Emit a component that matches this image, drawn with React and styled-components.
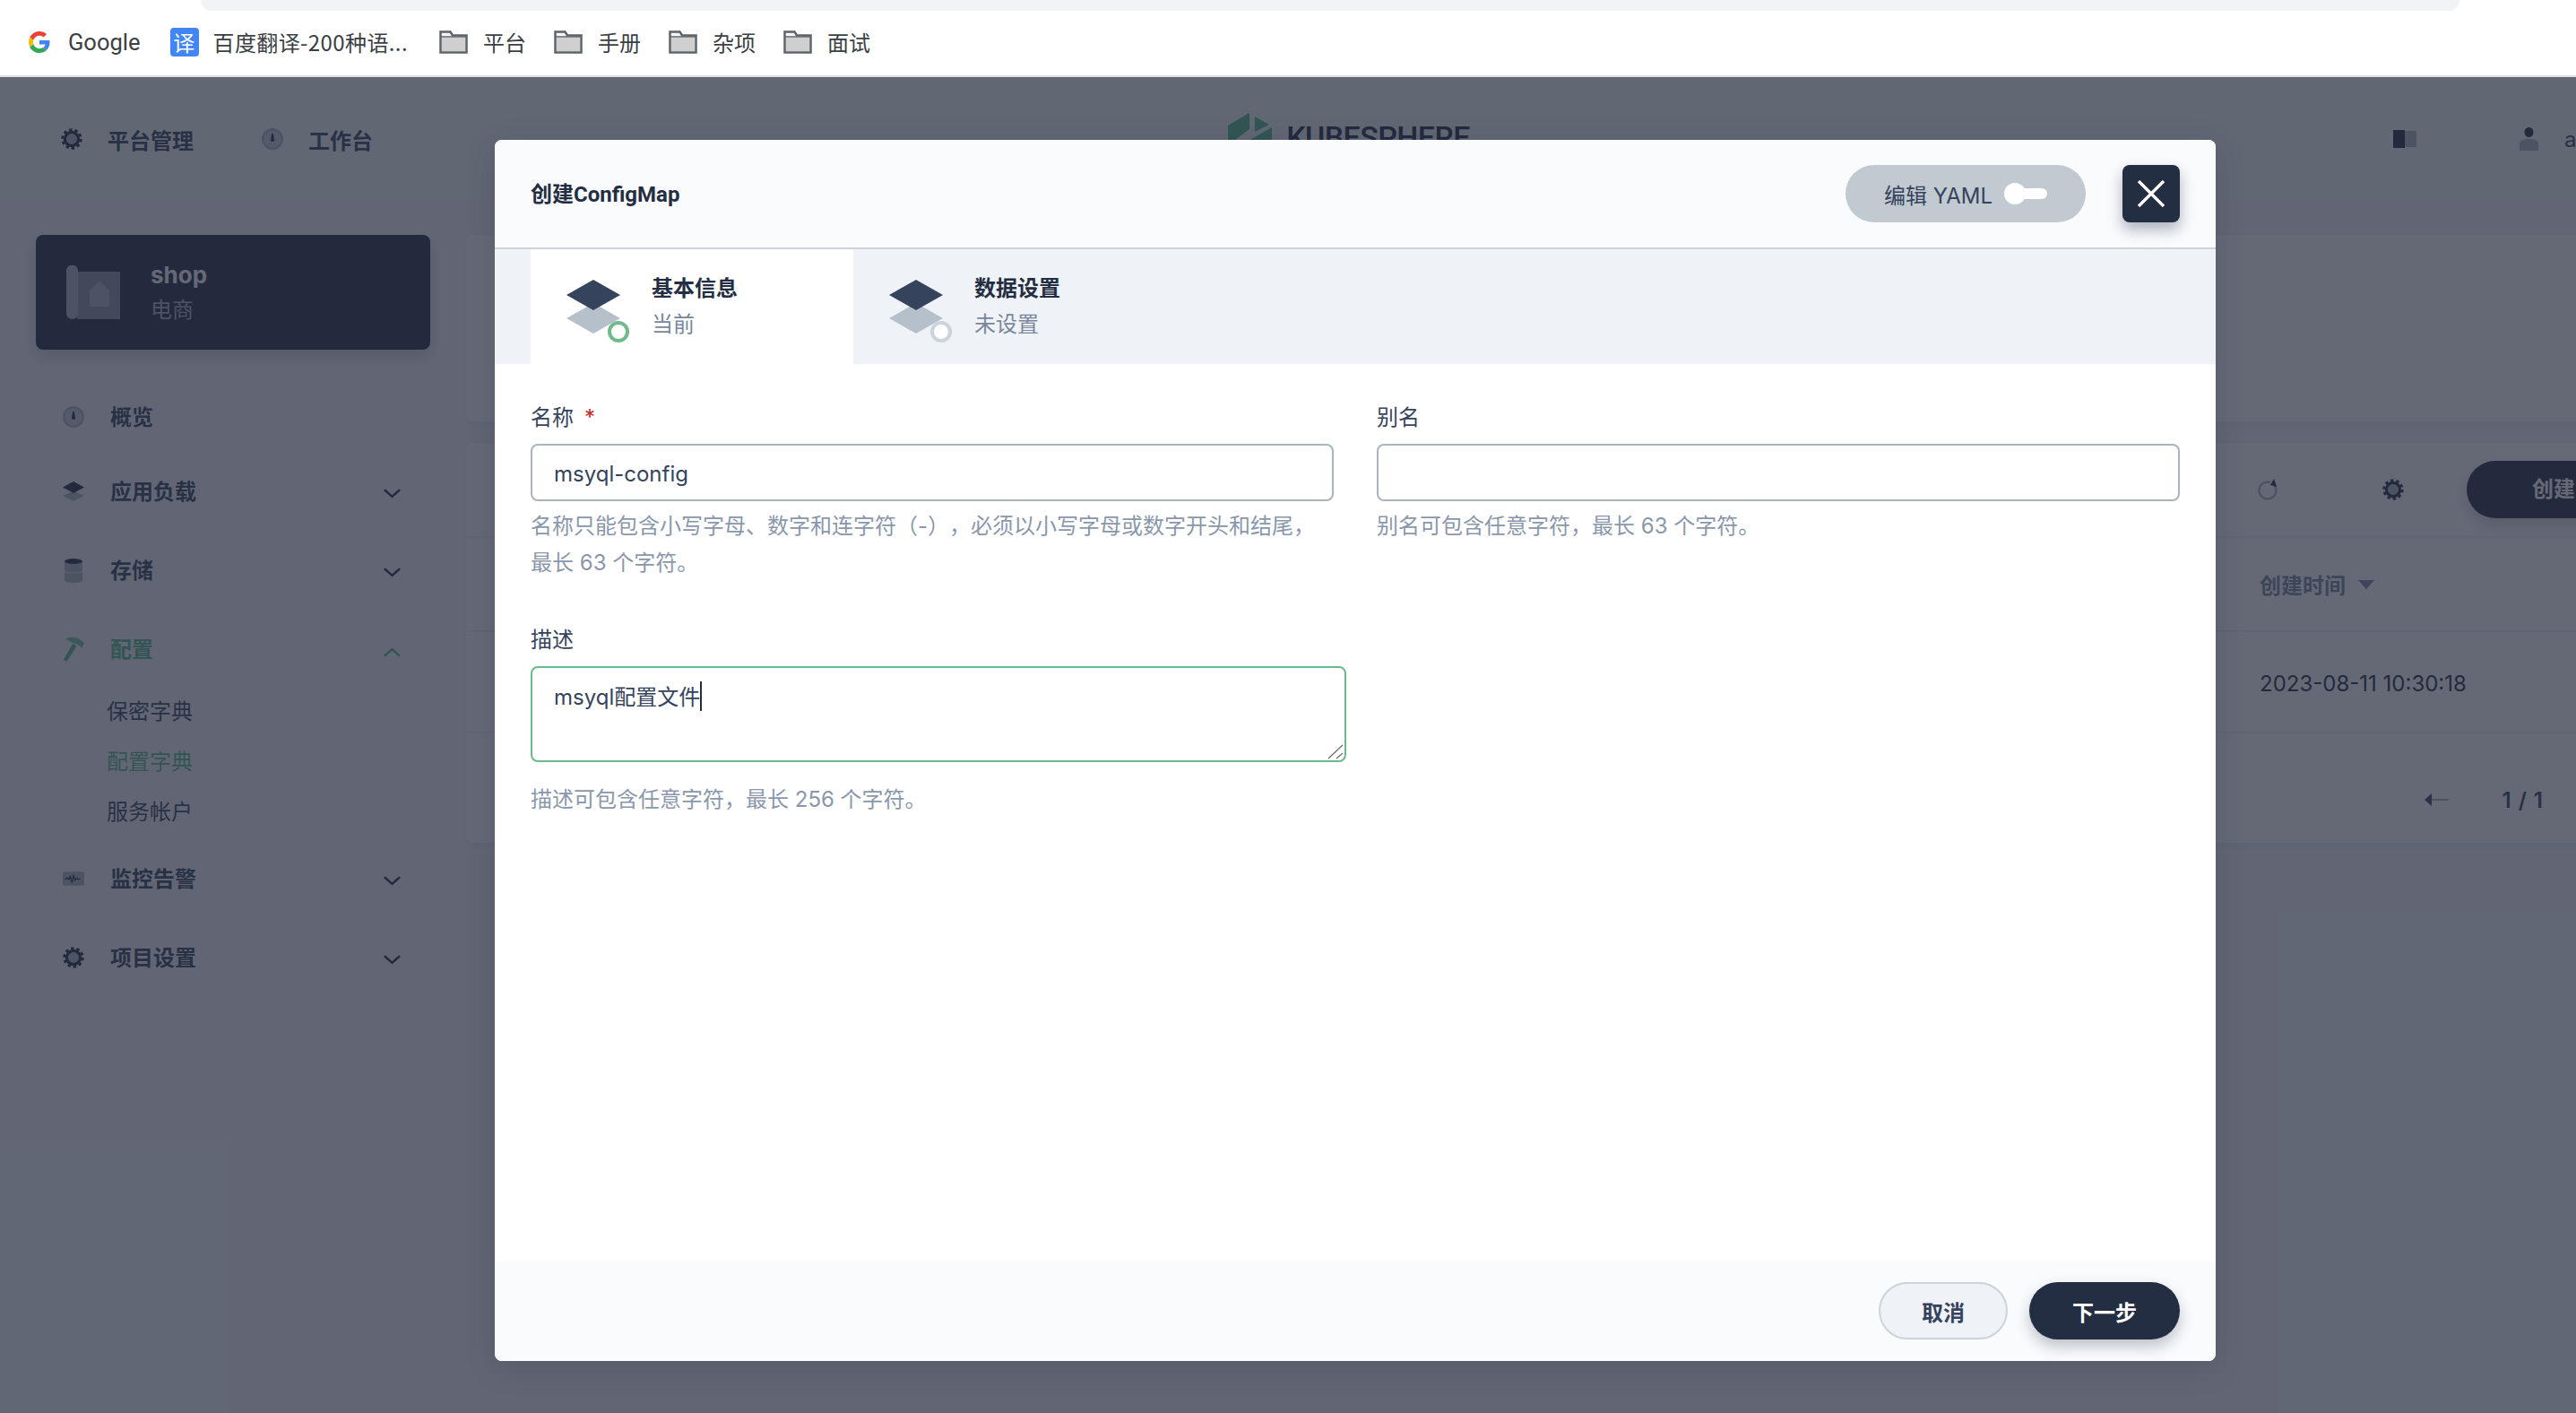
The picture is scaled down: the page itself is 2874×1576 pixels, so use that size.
import styled, { createGlobalStyle } from "styled-components";

const GlobalStyle = createGlobalStyle`
  html, body {
    margin: 0;
    padding: 0;
    overflow: hidden;
    background: #fff;
  }
  * {
    box-sizing: border-box;
  }
  body {
    font-family: Inter, "Noto Sans CJK SC", sans-serif;
    font-size: 24px;
    color: #242e42;
    text-spacing-trim: space-all;
  }
`;

const Screen = styled.div`
  width: 2874px;
  height: 1576px;
  overflow: hidden;
  display: flex;
  flex-direction: column;
`;

/* browser chrome */
const BookmarkBar = styled.div`
  position: relative;
  flex: none;
  height: 86px;
  padding: 10px 0 0 32px;
  display: flex;
  align-items: center;
  gap: 31px;
  background: #fff;
  border-bottom: 2px solid #dfe1e5;
`;

const AddressEdge = styled.div`
  position: absolute;
  top: 0;
  left: 224px;
  width: 2520px;
  height: 12px;
  background: #f1f3f4;
  border-radius: 0 0 24px 24px;
`;

const Bookmark = styled.div`
  display: flex;
  align-items: center;
  gap: ${({ $gap }) => $gap || 17}px;
  margin-right: ${({ $after }) => $after || 0}px;
  font-family: "Noto Sans CJK SC", sans-serif;
  font-size: 24px;
  line-height: 32px;
  letter-spacing: ${({ $tracking }) => $tracking || 0}px;
  color: #3c4043;
`;

const GoogleName = styled.span`
  font-family: Roboto, sans-serif;
  font-size: 25.5px;
`;

const TranslateBadge = styled.span`
  width: 32px;
  height: 32px;
  border-radius: 4px;
  background: #4285f4;
  color: #fff;
  font-size: 24px;
  line-height: 32px;
  text-align: center;
`;

/* page under the dialog */
const Page = styled.div`
  position: relative;
  flex: 1;
  width: 3024px;
  background: #f4f6f8;
`;

const TopNav = styled.header`
  height: 138px;
  padding: 0 68px;
  display: grid;
  grid-template-columns: 1fr auto 1fr;
  align-items: center;
  background: #f5f7f9;
`;

const NavLeft = styled.div`
  display: flex;
  align-items: center;
`;

const NavLink = styled.div`
  display: flex;
  align-items: center;
  gap: 28px;
  margin-right: 76px;
  font-weight: 600;
  color: #36435c;
`;

const Logo = styled.div`
  display: flex;
  align-items: flex-start;
  gap: 16px;
  align-self: start;
  margin: 40px 0 0 -14px;
`;

const LogoText = styled.span`
  font-family: Roboto, sans-serif;
  font-size: 34px;
  font-weight: 500;
  line-height: 34px;
  margin-top: 10px;
  letter-spacing: -0.6px;
  color: #242e42;
`;

const NavRight = styled.div`
  display: flex;
  justify-content: flex-end;
  align-items: center;
  gap: 115px;
`;

const UserBox = styled.div`
  display: flex;
  align-items: center;
  gap: 29px;
  width: 145px;
  color: #36435c;
`;

const Main = styled.div`
  margin-top: 38px;
  padding: 0 40px;
  display: flex;
  gap: 40px;
`;

const Sidebar = styled.aside`
  flex: none;
  width: 440px;
`;

const ProjectCard = styled.div`
  height: 128px;
  margin-bottom: 36px;
  padding: 34px;
  display: flex;
  gap: 34px;
  border-radius: 8px;
  background: #242e42;
  box-shadow: 0 8px 16px rgba(36, 46, 66, 0.2);
`;

const ProjectText = styled.div`
  margin-top: -9px;
  font-size: 24px;
  line-height: 38px;
  color: #abb4be;

  strong {
    display: block;
    font-size: 26px;
    font-weight: 700;
    line-height: 40px;
    color: #fff;
  }
`;

const SideRow = styled.div`
  height: ${({ $height }) => $height || 88}px;
  padding: 0 33px 0 30px;
  display: flex;
  align-items: center;
  font-weight: 600;
  color: ${({ $active }) => ($active ? "#55bc8a" : "#36435c")};
`;

const SideIcon = styled.span`
  flex: none;
  width: 24px;
  margin-right: 29px;
  display: flex;
  justify-content: center;
`;

const SideLabel = styled.span`
  flex: 1;
  margin-top: -3px;
`;

const Chevron = styled.svg`
  flex: none;
  width: 19px;
  height: 12px;
  margin-top: 6px;
`;

const SubList = styled.div`
  margin: -2px 0 2px;
`;

const SubItem = styled.div`
  height: 56px;
  padding-left: 79px;
  line-height: 56px;
  color: ${({ $active }) => ($active ? "#55bc8a" : "#36435c")};
`;

const Content = styled.main`
  flex: 1;
  display: flex;
  flex-direction: column;
  gap: 24px;
`;

const Card = styled.section`
  height: ${({ $height }) => $height}px;
  background: #fff;
  border-radius: 8px;
  box-shadow: 0 4px 8px rgba(36, 46, 66, 0.06);
`;

const Toolbar = styled.div`
  height: 106px;
  padding-right: 38px;
  display: flex;
  justify-content: flex-end;
  align-items: center;
  border-bottom: 2px solid #eff2f7;
`;

const ToolIcon = styled.span`
  display: flex;
  margin-right: ${({ $space }) => $space}px;
`;

const CreateButton = styled.div`
  width: 194px;
  height: 64px;
  border-radius: 32px;
  background: #242e42;
  color: #fff;
  font-weight: 600;
  line-height: 64px;
  text-align: center;
  box-shadow: 0 8px 16px rgba(36, 46, 66, 0.2);
`;

const TableRow = styled.div`
  height: ${({ $height }) => $height}px;
  padding: ${({ $head }) => ($head ? 0 : 3)}px 0 0 2001px;
  display: flex;
  align-items: center;
  gap: 14px;
  border-bottom: 2px solid #eff2f7;
  font-weight: ${({ $head }) => ($head ? 600 : 400)};
  color: ${({ $head }) => ($head ? "#79879c" : "#242e42")};
`;

const SortArrow = styled.span`
  width: 0;
  height: 0;
  border-left: 9px solid transparent;
  border-right: 9px solid transparent;
  border-top: 10px solid #79879c;
`;

const Pager = styled.div`
  height: 120px;
  padding: 28px 146px 0 0;
  display: flex;
  justify-content: flex-end;
  align-items: center;
  gap: 60px;
  font-weight: 600;
  letter-spacing: 1px;
  color: #36435c;
`;

/* dialog */
const Overlay = styled.div`
  position: absolute;
  inset: 0;
  padding-top: 70px;
  display: flex;
  justify-content: center;
  align-items: flex-start;
  background: rgba(35, 42, 60, 0.7);
`;

const Modal = styled.div`
  width: 1920px;
  height: 1362px;
  display: flex;
  flex-direction: column;
  overflow: hidden;
  background: #fff;
  border-radius: 8px;
  box-shadow: 0 8px 32px rgba(36, 46, 66, 0.2);
`;

const ModalHeader = styled.div`
  flex: none;
  height: 122px;
  padding: 0 40px;
  display: flex;
  align-items: center;
  background: #f9fbfd;
  border-bottom: 2px solid #ccd3db;
`;

const ModalTitle = styled.h1`
  flex: 1;
  margin: -3px 0 0;
  font-family: Roboto, "Noto Sans CJK SC", sans-serif;
  font-size: 24px;
  font-weight: 700;
  color: #242e42;
`;

const YamlSwitch = styled.div`
  width: 268px;
  height: 64px;
  margin-right: 41px;
  padding-left: 43px;
  display: flex;
  align-items: center;
  gap: 13px;
  border-radius: 32px;
  background: #c1c9d1;
  color: #36435c;
  font-size: 24px;
  white-space: nowrap;
`;

const SwitchTrack = styled.span`
  position: relative;
  width: 48px;
  height: 12px;
  border-radius: 6px;
  background: #fff;

  &::before {
    content: "";
    position: absolute;
    left: 0;
    top: -6px;
    width: 24px;
    height: 24px;
    border-radius: 50%;
    background: #fff;
  }
`;

const CloseButton = styled.div`
  width: 64px;
  height: 64px;
  display: flex;
  justify-content: center;
  align-items: center;
  border-radius: 8px;
  background: #242e42;
  box-shadow: 0 8px 16px rgba(36, 46, 66, 0.36);
`;

const Tabs = styled.div`
  flex: none;
  height: 128px;
  padding-left: 40px;
  display: flex;
  background: #eff2f7;
`;

const Tab = styled.div`
  width: 360px;
  padding-left: 40px;
  display: flex;
  align-items: center;
  gap: 25px;
  background: ${({ $active }) => ($active ? "#fff" : "transparent")};
`;

const StepSvg = styled.svg`
  flex: none;
  width: 70px;
  height: 70px;
  margin-top: 10px;
`;

const TabText = styled.div`
  line-height: 40px;
  color: #79879c;

  strong {
    display: block;
    font-weight: 700;
    color: #242e42;
  }
`;

const Form = styled.div`
  flex: 1;
  padding: 40px 40px 0;
`;

const FieldGrid = styled.div`
  display: grid;
  grid-template-columns: 896px 896px;
  gap: 48px;
  margin-bottom: 46px;
`;

const Label = styled.div`
  height: 40px;
  margin-bottom: 9px;
  line-height: 40px;
  color: #36435c;

  em {
    margin-left: 12px;
    font-style: normal;
    color: #ca2621;
  }
`;

const TextBox = styled.div`
  height: 64px;
  padding: 2px 24px 0;
  display: flex;
  align-items: center;
  border: 2px solid #abb4be;
  border-radius: 8px;
  color: #36435c;
`;

const AreaBox = styled.div`
  position: relative;
  width: 910px;
  height: 107px;
  padding: 13px 24px;
  line-height: 40px;
  border: 2px solid #6bb98d;
  border-radius: 8px;
  color: #36435c;
`;

const Caret = styled.span`
  display: inline-block;
  width: 2px;
  height: 33px;
  vertical-align: -7px;
  background: #242e42;
`;

const ResizeGrip = styled.svg`
  position: absolute;
  right: 1px;
  bottom: 1px;
  width: 18px;
  height: 17px;
`;

const Hint = styled.div`
  margin-top: ${({ $top }) => $top || 8}px;
  line-height: 40.5px;
  color: #8a97ab;
`;

const ModalFooter = styled.div`
  flex: none;
  height: 112px;
  padding: 0 40px;
  display: flex;
  justify-content: flex-end;
  align-items: center;
  gap: 24px;
  background: #f9fbfd;
`;

const Button = styled.div`
  width: ${({ $primary }) => ($primary ? 168 : 144)}px;
  height: 64px;
  border-radius: 32px;
  border: ${({ $primary }) => ($primary ? "none" : "2px solid #ccd3db")};
  background: ${({ $primary }) => ($primary ? "#242e42" : "#eff2f7")};
  color: ${({ $primary }) => ($primary ? "#fff" : "#36435c")};
  box-shadow: ${({ $primary }) => ($primary ? "0 8px 16px rgba(36, 46, 66, 0.28)" : "none")};
  font-weight: 600;
  display: flex;
  justify-content: center;
  align-items: center;
`;

const GoogleIcon = () => (
  <svg width="24" height="24" viewBox="0 0 48 48">
    <path fill="#EA4335" d="M24 9.5c3.54 0 6.71 1.22 9.21 3.6l6.85-6.85C35.9 2.38 30.47 0 24 0 14.62 0 6.51 5.38 2.56 13.22l7.98 6.19C12.43 13.72 17.74 9.5 24 9.5z" />
    <path fill="#4285F4" d="M46.98 24.55c0-1.57-.15-3.09-.38-4.55H24v9.02h12.94c-.58 2.96-2.26 5.48-4.78 7.18l7.73 6c4.51-4.18 7.09-10.36 7.09-17.65z" />
    <path fill="#FBBC05" d="M10.53 28.59c-.48-1.45-.76-2.99-.76-4.59s.27-3.14.76-4.59l-7.98-6.19C.92 16.46 0 20.12 0 24c0 3.88.92 7.54 2.56 10.78l7.97-6.19z" />
    <path fill="#34A853" d="M24 48c6.48 0 11.93-2.13 15.89-5.81l-7.73-6c-2.15 1.45-4.92 2.3-8.16 2.3-6.26 0-11.57-4.22-13.47-9.91l-7.98 6.19C6.51 42.62 14.62 48 24 48z" />
  </svg>
);

const FolderIcon = () => (
  <svg width="32" height="26" viewBox="0 0 32 26">
    <path d="M1.5 24.5V1.5h11l2.5 4h15.5v19z" fill="#f6f6f6" stroke="#5f6368" strokeWidth="2.5" />
    <rect x="3" y="8" width="26" height="15" fill="#cfcfcf" />
    <path d="M1.5 7h29" stroke="#5f6368" strokeWidth="1.5" />
  </svg>
);

const Gear = ({ size = 24 }) => (
  <svg width={size} height={size} viewBox="0 0 24 24">
    <circle cx="12" cy="12" r="10.2" fill="none" stroke="#242e42" strokeWidth="3" strokeDasharray="3.4 3" />
    <circle cx="12" cy="12" r="7.5" fill="none" stroke="#242e42" strokeWidth="3.4" />
    <circle cx="12" cy="12" r="5.8" fill="#abb4be" />
  </svg>
);

const Gauge = ({ size = 24 }) => (
  <svg width={size} height={size} viewBox="0 0 24 24">
    <circle cx="12" cy="12" r="12" fill="#abb4be" />
    <circle cx="12" cy="12" r="9.5" fill="#c7ced6" />
    <path d="M10 13l1.2-7h1.6l1.2 7a2 2 0 1 1-4 0z" fill="#242e42" />
  </svg>
);

const LayersIcon = () => (
  <svg width="24" height="24" viewBox="0 0 24 24">
    <path d="M12 11.5L24 17l-12 6-12-6z" fill="#abb4be" />
    <path d="M12 1l12 6.5L12 14 0 7.5z" fill="#242e42" />
  </svg>
);

const DatabaseIcon = () => (
  <svg width="20" height="27" viewBox="0 0 20 27">
    <path d="M0 3h20v10c0 2-4.5 2.5-10 2.5S0 15 0 13z" fill="#abb4be" />
    <path d="M0 15c3 1.6 17 1.6 20 0v9c0 2-4.5 3-10 3S0 26 0 24z" fill="#abb4be" />
    <ellipse cx="10" cy="3" rx="10" ry="3" fill="#242e42" />
  </svg>
);

const HammerIcon = () => (
  <svg width="24" height="28" viewBox="0 0 24 28">
    <path d="M1 25.5L11 8l4.5 2.5L4.5 28z" fill="#55bc8a" />
    <path d="M3 2.5C9-.5 18 0 24 7.5l-3 5.5c-2-3.5-5-5-9-5.5z" fill="#72c79f" />
  </svg>
);

const MonitorIcon = () => (
  <svg width="28" height="18" viewBox="0 0 28 18">
    <rect width="28" height="18" rx="2" fill="#abb4be" />
    <path d="M3 10l3-2 2 2 2-4 2 8 2-9 2 6 2-3 2 2 3-1" fill="none" stroke="#242e42" strokeWidth="1.5" />
  </svg>
);

const ChevronIcon = ({ up, color = "#242e42" }) => (
  <Chevron viewBox="0 0 20 12">
    <path d={up ? "M1 11l9-8 9 8" : "M1 1l9 8 9-8"} fill="none" stroke={color} strokeWidth="2.6" />
  </Chevron>
);

const StepIcon = ({ color }) => (
  <StepSvg viewBox="0 0 70 70">
    <path d="M30 26L60 43 30 60 0 43z" fill="#b6c0ca" />
    <path d="M30 0L60 17 30 34 0 17z" fill="#36435c" />
    <circle cx="58" cy="58" r="10" fill="#fff" stroke={color} strokeWidth="4" />
  </StepSvg>
);

const menu = [
  { label: "应用负载", icon: <LayersIcon /> },
  { label: "存储", icon: <DatabaseIcon /> },
];

const App = () => {
  return (
    <Screen>
      <GlobalStyle />
      <BookmarkBar>
        <AddressEdge />
        <Bookmark $gap={20} $after={2}>
          <GoogleIcon />
          <GoogleName>Google</GoogleName>
        </Bookmark>
        <Bookmark $gap={16} $after={4} $tracking={0.4}>
          <TranslateBadge>译</TranslateBadge>
          百度翻译-200种语...
        </Bookmark>
        {["平台", "手册", "杂项", "面试"].map((name) => (
          <Bookmark key={name}>
            <FolderIcon />
            {name}
          </Bookmark>
        ))}
      </BookmarkBar>

      <Page>
        <TopNav>
          <NavLeft>
            <NavLink>
              <Gear />
              平台管理
            </NavLink>
            <NavLink>
              <Gauge />
              工作台
            </NavLink>
          </NavLeft>
          <Logo>
            <svg width="49" height="58" viewBox="0 0 49 58">
              <path d="M0 14L24 0v14L0 28z M30 4l16 9-16 8z" fill="#55bc8a" />
              <path d="M0 14l24-14v18L8 30h41v-14L0 44z" fill="#55bc8a" />
            </svg>
            <LogoText>KUBESPHERE</LogoText>
          </Logo>
          <NavRight>
            <svg width="26" height="20" viewBox="0 0 26 20">
              <rect width="13" height="20" fill="#242e42" />
              <rect x="13" y="1" width="13" height="18" fill="#abb4be" />
            </svg>
            <UserBox>
              <svg width="21" height="26" viewBox="0 0 21 26">
                <ellipse cx="10.5" cy="5.5" rx="5" ry="5.5" fill="#242e42" />
                <path d="M0 26v-8c0-3 4-5 10.5-5S21 15 21 18v8z" fill="#abb4be" />
              </svg>
              admin
            </UserBox>
          </NavRight>
        </TopNav>

        <Main>
          <Sidebar>
            <ProjectCard>
              <svg width="60" height="60" viewBox="0 0 60 60">
                <rect x="12" y="7" width="48" height="53" fill="#8b95a5" />
                <path d="M0 6a6.5 6.5 0 0 1 13 0v48a6.5 6 0 0 1-13 0z" fill="#abb4be" />
                <path d="M26 28l11-11 11 11v18H26z" fill="#abb4be" />
              </svg>
              <ProjectText>
                <strong>shop</strong>
                电商
              </ProjectText>
            </ProjectCard>

            <SideRow $height={78}>
              <SideIcon>
                <Gauge />
              </SideIcon>
              <SideLabel>概览</SideLabel>
            </SideRow>
            {menu.map((item) => (
              <SideRow key={item.label}>
                <SideIcon>{item.icon}</SideIcon>
                <SideLabel>{item.label}</SideLabel>
                <ChevronIcon />
              </SideRow>
            ))}
            <SideRow $active>
              <SideIcon>
                <HammerIcon />
              </SideIcon>
              <SideLabel>配置</SideLabel>
              <ChevronIcon up color="#55bc8a" />
            </SideRow>
            <SubList>
              <SubItem>保密字典</SubItem>
              <SubItem $active>配置字典</SubItem>
              <SubItem>服务帐户</SubItem>
            </SubList>
            <SideRow>
              <SideIcon>
                <MonitorIcon />
              </SideIcon>
              <SideLabel>监控告警</SideLabel>
              <ChevronIcon />
            </SideRow>
            <SideRow>
              <SideIcon>
                <Gear />
              </SideIcon>
              <SideLabel>项目设置</SideLabel>
              <ChevronIcon />
            </SideRow>
          </Sidebar>

          <Content>
            <Card $height={208} />
            <Card $height={446}>
              <Toolbar>
                <ToolIcon $space={115}>
                  <svg width="24" height="24" viewBox="0 0 24 24">
                    <path d="M19 8a9.5 9.5 0 1 1-5-4" fill="none" stroke="#abb4be" strokeWidth="2.4" />
                    <path d="M18 0l3 9-7-2z" fill="#242e42" />
                  </svg>
                </ToolIcon>
                <ToolIcon $space={70}>
                  <Gear />
                </ToolIcon>
                <CreateButton>创建</CreateButton>
              </Toolbar>
              <TableRow $head $height={105}>
                创建时间
                <SortArrow />
              </TableRow>
              <TableRow $height={113}>2023-08-11 10:30:18</TableRow>
              <Pager>
                <svg width="27" height="14" viewBox="0 0 27 14">
                  <path d="M8 0v14L0 7z" fill="#36435c" />
                  <rect x="8" y="6" width="19" height="2" fill="#abb4be" />
                </svg>
                <span>1 / 1</span>
              </Pager>
            </Card>
          </Content>
        </Main>

        <Overlay>
          <Modal>
            <ModalHeader>
              <ModalTitle>创建ConfigMap</ModalTitle>
              <YamlSwitch>
                编辑 YAML
                <SwitchTrack />
              </YamlSwitch>
              <CloseButton>
                <svg width="32" height="30" viewBox="0 0 32 30">
                  <path d="M2 1l28 28M30 1L2 29" stroke="#fff" strokeWidth="3.4" />
                </svg>
              </CloseButton>
            </ModalHeader>

            <Tabs>
              <Tab $active>
                <StepIcon color="#6fbb8b" />
                <TabText>
                  <strong>基本信息</strong>
                  当前
                </TabText>
              </Tab>
              <Tab>
                <StepIcon color="#ccd3db" />
                <TabText>
                  <strong>数据设置</strong>
                  未设置
                </TabText>
              </Tab>
            </Tabs>

            <Form>
              <FieldGrid>
                <div>
                  <Label>
                    名称<em>*</em>
                  </Label>
                  <TextBox>msyql-config</TextBox>
                  <Hint>
                    名称只能包含小写字母、数字和连字符（-），必须以小写字母或数字开头和结尾，最长 63 个字符。
                  </Hint>
                </div>
                <div>
                  <Label>别名</Label>
                  <TextBox />
                  <Hint>别名可包含任意字符，最长 63 个字符。</Hint>
                </div>
              </FieldGrid>
              <Label>描述</Label>
              <AreaBox>
                msyql配置文件
                <Caret />
                <ResizeGrip viewBox="0 0 18 17">
                  <path d="M17 1L1 16M17 10l-7 6" stroke="#6b6b6b" strokeWidth="1.2" />
                </ResizeGrip>
              </AreaBox>
              <Hint $top={22}>描述可包含任意字符，最长 256 个字符。</Hint>
            </Form>

            <ModalFooter>
              <Button>取消</Button>
              <Button $primary>下一步</Button>
            </ModalFooter>
          </Modal>
        </Overlay>
      </Page>
    </Screen>
  );
};

export default App;
